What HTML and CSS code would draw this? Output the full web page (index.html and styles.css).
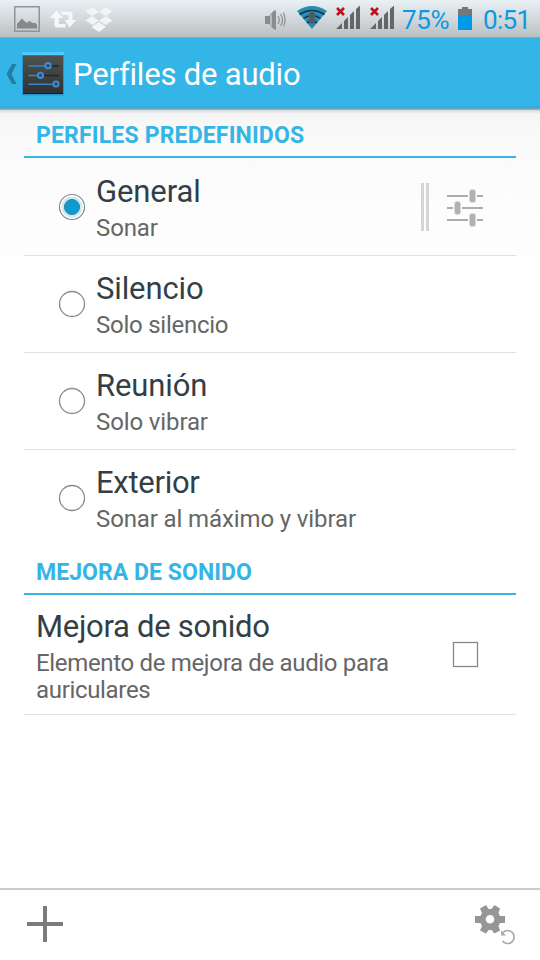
FILE: index.html
```html
<!DOCTYPE html>
<html lang="es">
<head>
<meta charset="utf-8">
<title>Perfiles de audio</title>
<link rel="stylesheet" href="styles.css">
</head>
<body>
<header class="status">
  <svg class="notifs" width="120" height="37" viewBox="0 0 120 37">
    <rect x="14.75" y="6.75" width="24.5" height="24.500" fill="none" stroke="#909496" stroke-width="1.5"/>
    <path d="M17 28.500V24l5-5.500 4.500 4.500 3-2 3 2h3l1.500 2v3.500z" fill="#85898b"/>
    <g fill="#f4f6f7"><path d="M56.500 10.500 63.500 18H59v6h6.500v3.500H57q-2.500 0-2.500-2.500v-7h-5z"/><path d="M60.500 11.500H70q2.500 0 2.500 2.500v6H76.500L69.500 27.500 64.500 20h4v-5h-6z"/></g>
    <path d="M92.500 7 99 12l-7 4-6.500-5zM105.500 7 112 11.500 106 16l-7-4zM85.500 20.500 92 16l7 4.500-6.500 4.500zM106 16l6.500 4.500-7 4.500-6.500-4.500zM99 22l6.500 4.500v.8L99 32l-7-4.500v-1z" fill="#f2f5f6"/>
  </svg>
  <div class="indicators">
    <svg width="134" height="37" viewBox="262 0 134 37">
      <path d="M265 16h4l5-5.500h2v19h-2l-5-5.500h-4z" fill="#8b8c8c"/>
      <path d="M271 14.500v11" stroke="#c9cdcf" stroke-width="1.500"/>
      <path d="M278 16q2.500 4 0 8M280.500 14q4 6 0 12M283.500 12.500q3 7.500 0 14" fill="none" stroke="#929494" stroke-width="1.300"/>
      <path d="M297 11q15-10 30 0L312 29z" fill="#258db7"/>
      <path d="M299.500 14.500q12.500-8 25 0M303.500 18.500q8.500-6 17 0M307 23q5-4 10 0" fill="none" stroke="#17303a" stroke-width="1.500"/>
      <path d="m312 10 4.500 6-2 .5v3h2L312 25l-4.500-5.500h2v-3l-2-.5z" fill="#4b5c63"/>
      <g id="signal"><path d="M336 29l6-6v6zM344 29v-8l4-4v12zM350 29V15l4-4v18zM356 29V9l4-3.500V29z" fill="#656767"/><path d="m337 8 7 7m0-7-7 7" stroke="#b8121b" stroke-width="2.600"/></g>
      <use href="#signal" x="34"/>
    </svg>
    <span class="percent">75%</span>
    <svg class="battery" width="14" height="24" viewBox="0 0 14 24"><path d="M0 2h4V0h6v2h4v6H0z" fill="#777"/><path d="M0 8h14v15H0z" fill="#0099e5"/></svg>
    <span class="clock">0:51</span>
  </div>
</header>
<nav class="actionbar">
  <svg width="66" height="72" viewBox="0 38 66 72">
    <defs><linearGradient id="ic" x2="0" y2="1"><stop stop-color="#505250"/><stop offset="1" stop-color="#303230"/></linearGradient></defs>
    <path d="M12 64h4.500l-5 10 5 10H12l-5.500-10z" fill="#217fa3"/>
    <rect x="22" y="52" width="42" height="43.500" rx="1" fill="#2795d4"/>
    <path d="M22 52h42v3H22z" fill="#52c9ff"/>
    <rect x="23" y="55.500" width="40" height="38.500" fill="url(#ic)"/>
    <path d="M23 93h40v1H23z" fill="#151a1d"/>
    <path d="M50 66h9M43 75.500h16" stroke="#162a3a" stroke-width="1.500"/>
    <path d="M28.500 66H46M28.500 75.500H38M28.500 84.300H54" stroke="#3286cc" stroke-width="1.600"/>
    <g fill="#3a4852" stroke="#3d8fd6" stroke-width="1.800"><circle cx="48" cy="65.700" r="2.700"/><circle cx="40.500" cy="75.300" r="2.700"/><circle cx="56" cy="84" r="2.700"/></g>
  </svg>
  <h1>Perfiles de audio</h1>
</nav>
<main>
  <h2>PERFILES PREDEFINIDOS</h2>
  <div class="row first">
    <svg class="radio" width="28" height="28" viewBox="0 0 28 28"><circle cx="14" cy="14" r="12.500" fill="#fff" stroke="#8a8a8a" stroke-width="1.200"/><circle cx="14" cy="14" r="10.500" fill="#cbeaf7"/><circle cx="14" cy="14" r="7.600" fill="#0c9bd0" stroke="#3f85a0"/></svg>
    <div class="text"><div class="title">General</div><div class="sub">Sonar</div></div>
    <svg class="tune" width="66" height="50" viewBox="420 182 66 50">
      <path d="M421 183h3v48h-3zM426 183h3v48h-3z" fill="#d5d5d5"/>
      <path d="M447 196h21M477 196h6M447 208h6M462 208h21M447 220h21M477 220h6" stroke="#adadad" stroke-width="2"/>
      <g fill="#b1b1b1" stroke="#d6d6d6"><rect x="469.500" y="189.500" width="6" height="13" rx="2.500"/><rect x="454.500" y="201.500" width="6" height="13" rx="2.500"/><rect x="469.500" y="213.500" width="6" height="13" rx="2.500"/></g>
    </svg>
  </div>
  <div class="row">
    <svg class="radio" width="28" height="28" viewBox="0 0 28 28"><circle cx="14" cy="14" r="12.500" fill="#fff" stroke="#8a8a8a" stroke-width="1.300"/></svg>
    <div class="text"><div class="title">Silencio</div><div class="sub tight">Solo silencio</div></div>
  </div>
  <div class="row">
    <svg class="radio" width="28" height="28" viewBox="0 0 28 28"><circle cx="14" cy="14" r="12.500" fill="#fff" stroke="#8a8a8a" stroke-width="1.300"/></svg>
    <div class="text"><div class="title">Reunión</div><div class="sub">Solo vibrar</div></div>
  </div>
  <div class="row last">
    <svg class="radio" width="28" height="28" viewBox="0 0 28 28"><circle cx="14" cy="14" r="12.500" fill="#fff" stroke="#8a8a8a" stroke-width="1.300"/></svg>
    <div class="text"><div class="title tight">Exterior</div><div class="sub">Sonar al máximo y vibrar</div></div>
  </div>
  <h2 class="second">MEJORA DE SONIDO</h2>
  <div class="row enhance">
    <div class="text"><div class="title tight">Mejora de sonido</div><div class="sub tighter">Elemento de mejora de audio para<br>auriculares</div></div>
    <div class="checkbox"></div>
  </div>
</main>
<footer>
  <svg width="38" height="38" viewBox="0 0 38 38"><path d="M17 1h4v36h-4zM1 17h36v4H1z" fill="#7b7b7b"/></svg>
  <svg width="42" height="42" viewBox="474 903 42 42">
    <path fill-rule="evenodd" fill="#969696" d="M475 916h5.500l1.500-3-2-4.500 6-3.500 2.500 4h3l3-4 5.500 3.500-1.500 4.500 1.500 3h5v7h-5l-1.500 3 1.500 4.500-5.500 3-3-3.500h-3l-2.500 3.500-6-3 2-4.500-1.500-3H475zM490 915a4.300 4.300 0 1 0 0 8.600 4.300 4.300 0 1 0 0-8.600z"/>
    <path d="M502.500 933a6.500 6.500 0 1 1 0 8" fill="none" stroke="#aaa" stroke-width="1.700"/><path d="M501 930.500v5h5z" fill="#aaa"/>
  </svg>
</footer>
</body>
</html>
```
FILE: styles.css
```css
* { box-sizing: border-box; }
body {
  margin: 0;
  width: 540px;
  height: 960px;
  display: flex;
  flex-direction: column;
  overflow: hidden;
  font-family: Roboto, "Noto Sans", sans-serif;
  background: #fff;
}
svg { display: block; flex: none; }
.status {
  height: 38px;
  flex: none;
  display: flex;
  justify-content: space-between;
  background: linear-gradient(#e9f1f4, #d3d9dc 50%, #bbc0c2);
  border-bottom: 1px solid #94a4ab;
}
.indicators { display: flex; width: 278px; color: #0c99e0; font-size: 26px; line-height: 40px; }
.percent { width: 48px; margin-left: 6px; letter-spacing: -.3px; white-space: nowrap; }
.battery { margin: 7px 0 0 8px; }
.clock { margin-left: 11px; letter-spacing: -.7px; white-space: nowrap; }
.actionbar {
  height: 72px;
  flex: none;
  display: flex;
  align-items: center;
  background: linear-gradient(#34b5e8 0 67px, #30a9d9 70px, #9fa9ad 71px);
}
h1 { margin: 2px 0 0 7px; font-size: 31px; line-height: 36px; font-weight: 400; letter-spacing: -.2px; color: #fff; white-space: nowrap; }
main { flex: 1; padding: 0 24px; background: linear-gradient(#d8d8d8, #f5f5f5 4px, #f9f9f9 20px, #fdfdfd 100px, #fff 200px); }
h2 {
  height: 48px;
  margin: 0;
  padding: 12px 12px 0;
  border-bottom: 2px solid #33b5e5;
  font-size: 23px;
  line-height: 28px;
  font-weight: 700;
  letter-spacing: .17px;
  color: #33b5e5;
  white-space: nowrap;
}
h2.second { height: 49px; padding-top: 13px; letter-spacing: .05px; }
.row { height: 97px; display: flex; align-items: flex-start; border-bottom: 1px solid #e1e1e1; padding: 15px 30px 0 34px; }
.row.first { height: 98px; padding-top: 16px; }
.row.last { height: 96px; border-color: transparent; }
.radio { margin: 19px 10px 0 0; }
.text { flex: 1; white-space: nowrap; }
.title { font-size: 31px; line-height: 36px; letter-spacing: -.12px; color: #333e46; }
.title.tight { letter-spacing: -.28px; }
.sub { margin-top: 5px; font-size: 24px; line-height: 27px; letter-spacing: -.12px; color: #666; }
.sub.tight { letter-spacing: -.25px; }
.sub.tighter { letter-spacing: -.33px; }
.tune { margin-top: 8px; }
.enhance { height: 120px; padding: 14px 38px 0 12px; }
.checkbox { width: 25px; height: 25px; margin-top: 33px; border: 1px solid #858585; box-shadow: 0 0 0 1px #eee, inset 0 0 0 1px #eee; }
footer {
  height: 72px;
  flex: none;
  display: flex;
  align-items: center;
  justify-content: space-between;
  padding: 0 24px 2px 26px;
  border-top: 2px solid #ccc;
  background: #fff;
}
```
